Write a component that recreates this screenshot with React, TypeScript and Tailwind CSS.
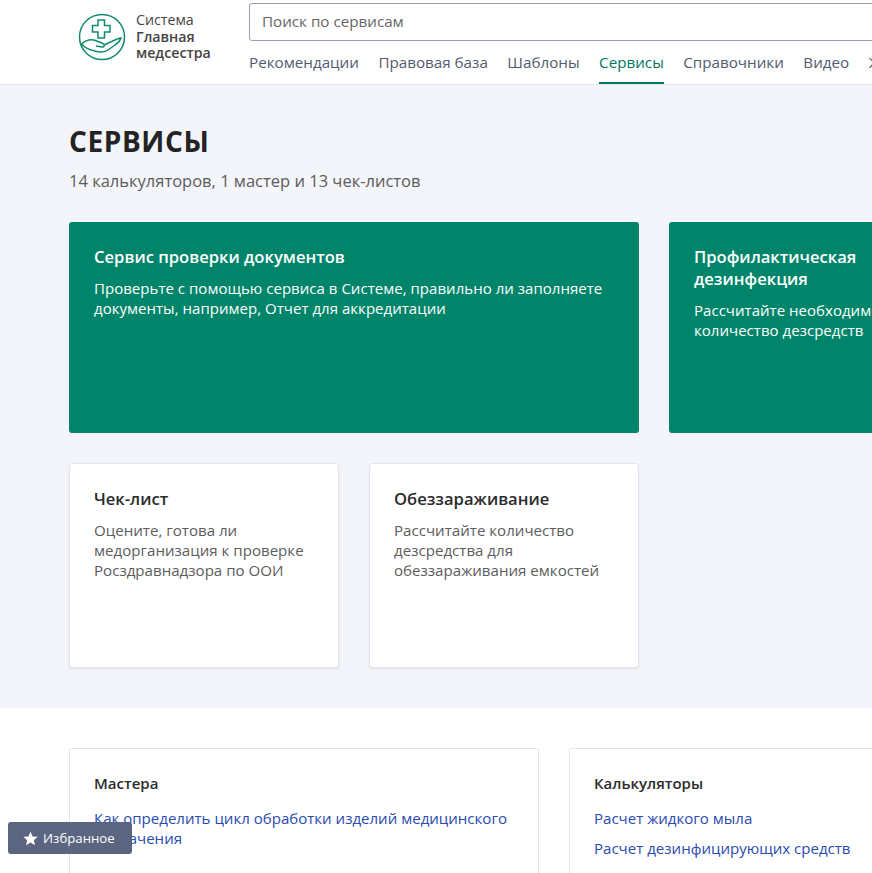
import React from 'react';

const navItems = ['Рекомендации', 'Правовая база', 'Шаблоны', 'Сервисы', 'Справочники', 'Видео', 'Журналы'];

function Logo() {
  return (
    <svg width="48" height="48" viewBox="0 0 48 48" fill="none" stroke="#0f8a6c" strokeWidth="1.5" className="shrink-0">
      <circle cx="24" cy="24" r="22.5" />
      <path d="M20 7h6.500v5.500H32V19h-5.500v6H20v-6h-5.500v-6.500H20z" />
      <path d="M3.500 31C8 27 12 26 16 27l8 3c3 1 3 4 0 4l-6-1" />
      <path d="M26 32l11-5c2-1 4-2 6-2-1 3-3 5-6 7l-7 5c-4 3-8 2-13 1-5-1-10-3-13.500-7" />
    </svg>
  );
}

function GreenCard({ title, text, wide }: { title: string; text: string; wide?: boolean }) {
  return (
    <div className={wide
      ? 'w-[570px] h-[211px] shrink-0 rounded-[3px] bg-[#00856a] px-[25px] pt-[24px] text-white'
      : 'w-[270px] h-[211px] shrink-0 rounded-[3px] bg-[#00856a] px-[25px] pt-[24px] text-white'}
    >
      <h3 className="text-[16.6px] leading-[22px] font-semibold">{title}</h3>
      <p className="mt-[10px] text-[15px] leading-[20px] tracking-[0.03px]">{text}</p>
    </div>
  );
}

function WhiteCard({ title, text }: { title: string; text: string }) {
  return (
    <div className="w-[270px] h-[205px] shrink-0 rounded-[3px] border border-[#e2e5f0] bg-white px-[24px] pt-[24px] shadow-[0_1px_2px_rgba(30,40,80,0.1)]">
      <h3 className="text-[16.6px] leading-[22px] font-semibold text-[#2b2b2b]">{title}</h3>
      <p className="mt-[10px] text-[15.1px] leading-[20px] text-[#5c5c5c]">{text}</p>
    </div>
  );
}

export default function App() {
  return (
    <div className="relative w-[872px] h-[873px] overflow-hidden bg-white font-['Open_Sans',sans-serif]">
      {/* header */}
      <header className="h-[85px] border-b border-[#e3e6f0] bg-white flex pl-[78px]">
        <div className="w-[171px] shrink-0 flex items-start pt-[13px] gap-[10px]">
          <Logo />
          <div className="text-[14.2px] leading-[16.500px] text-[#444] -mt-[1px]">
            Система
            <div className="font-semibold">Главная<br />медсестра</div>
          </div>
        </div>
        <div className="flex-1 min-w-0 pt-[3px]">
          <div className="w-[800px] h-[38px] rounded-[3px] border border-[#9aa1b5] flex items-center pl-[12px] pb-[2px] text-[15.2px] text-[#666]">
            Поиск по сервисам
          </div>
          <nav className="flex gap-[19.5px] whitespace-nowrap text-[15.2px] text-[#515a70]">
            {navItems.map((item) => (
              <a
                key={item}
                className={item === 'Сервисы'
                  ? 'h-[43px] pt-[10px] leading-[22px] border-b-2 border-[#00785f] text-[#00785f]'
                  : 'h-[43px] pt-[10px] leading-[22px]'}
              >
                {item}
              </a>
            ))}
          </nav>
        </div>
      </header>

      {/* services */}
      <section className="h-[623px] bg-[#f4f5fa] pl-[69px] pt-[38px]">
        <h1 className="text-[28px] leading-[36px] font-bold tracking-[0.6px] text-[#232323]">СЕРВИСЫ</h1>
        <p className="mt-[11px] text-[16.500px] leading-[22px] text-[#5c5c5c]">14 калькуляторов, 1 мастер и 13 чек-листов</p>
        <div className="mt-[30px] flex gap-[30px]">
          <GreenCard
            wide
            title="Сервис проверки документов"
            text="Проверьте с помощью сервиса в Системе, правильно ли заполняете документы, например, Отчет для аккредитации"
          />
          <GreenCard
            title="Профилактическая дезинфекция"
            text="Рассчитайте необходимое количество дезсредств"
          />
        </div>
        <div className="mt-[30px] flex gap-[30px]">
          <WhiteCard
            title="Чек-лист"
            text="Оцените, готова ли медорганизация к проверке Росздравнадзора по ООИ"
          />
          <WhiteCard
            title="Обеззараживание"
            text="Рассчитайте количество дезсредства для обеззараживания емкостей"
          />
        </div>
      </section>

      {/* lists */}
      <section className="flex gap-[30px] pl-[69px] pt-[40px]">
        <div className="w-[470px] h-[300px] shrink-0 rounded-[3px] border border-[#e2e5f0] px-[24px] pt-[23px]">
          <h3 className="text-[15px] leading-[22px] font-semibold text-[#2b2b2b]">Мастера</h3>
          <a className="block mt-[14px] text-[15.05px] leading-[20px] text-[#2a4bb0]">
            Как определить цикл обработки изделий медицинского назначения
          </a>
        </div>
        <div className="w-[470px] h-[300px] shrink-0 rounded-[3px] border border-[#e2e5f0] px-[24px] pt-[23px]">
          <h3 className="text-[15px] leading-[22px] font-semibold text-[#2b2b2b]">Калькуляторы</h3>
          <a className="block mt-[14px] text-[15.05px] leading-[20px] text-[#2a4bb0]">Расчет жидкого мыла</a>
          <a className="block mt-[10px] text-[15.05px] leading-[20px] text-[#2a4bb0]">Расчет дезинфицирующих средств</a>
        </div>
      </section>

      {/* favourites */}
      <button className="absolute left-[8px] top-[822px] h-[32px] w-[124px] rounded-[3px] bg-[#5b6580] flex items-center pl-[15px] gap-[5px] text-[13.2px] text-white">
        <svg width="15" height="15" viewBox="0 0 24 24" fill="white" className="shrink-0">
          <polygon points="12,1 15.300,8.600 23.500,9.300 17.300,14.700 19.200,22.800 12,18.500 4.800,22.800 6.700,14.700 0.500,9.300 8.700,8.600" />
        </svg>
        <span className="pt-[1px]">Избранное</span>
      </button>
    </div>
  );
}
